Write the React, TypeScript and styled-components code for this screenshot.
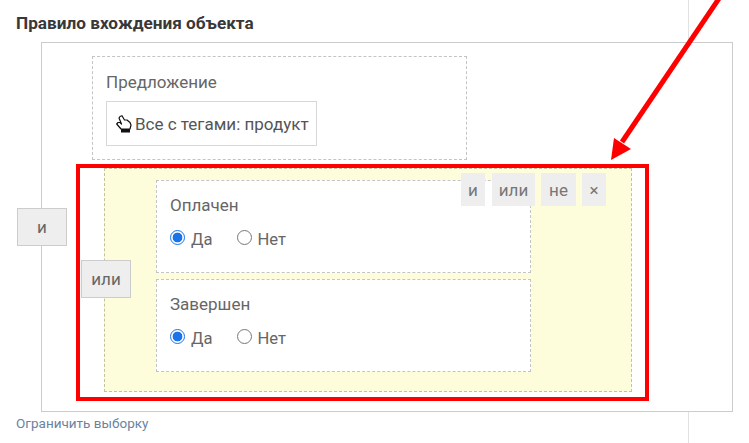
import styled, { createGlobalStyle } from "styled-components";

const GlobalStyle = createGlobalStyle`
  html, body {
    margin: 0;
    padding: 0;
    background: #fff;
    overflow: hidden;
  }
  body {
    font-family: Roboto, "Liberation Sans", sans-serif;
    color: #4a4a4a;
  }
`;

const Page = styled.div`
  position: relative;
  width: 749px;
  height: 443px;
  overflow: hidden;
`;

const Panel = styled.div`
  box-sizing: border-box;
  width: 689px;
  height: 443px;
  padding: 14px 0 0 16px;
  border-right: 1px solid #e2e2e2;
`;

const Title = styled.h3`
  margin: 0 0 9px;
  font-size: 17.2px;
  line-height: 19px;
  font-weight: 700;
  color: #383838;
`;

const RuleBox = styled.div`
  position: relative;
  box-sizing: border-box;
  width: 692px;
  height: 370px;
  margin-left: 25px;
  padding: 13px 0 0 50px;
  background: #fff;
  border: 1px solid #ccc;
`;

const Condition = styled.div<{ $height: number; $top: number }>`
  box-sizing: border-box;
  width: 375px;
  height: ${(p) => p.$height}px;
  padding: ${(p) => p.$top}px 13px 0;
  background: #fff;
  border: 1px dashed #c4c4c4;
`;

const ConditionName = styled.div`
  font-size: 17px;
  line-height: 24px;
  color: #666;
`;

const Offer = styled.div`
  box-sizing: border-box;
  display: flex;
  align-items: center;
  gap: 3px;
  width: 211px;
  height: 45px;
  margin-top: 7px;
  padding-left: 9px;
  font-size: 17px;
  color: #555;
  border: 1px solid #d8d8d8;
`;

const OrGroup = styled.div`
  position: relative;
  box-sizing: border-box;
  display: flex;
  flex-direction: column;
  gap: 6px;
  width: 528px;
  height: 224px;
  margin: 8px 0 0 12px;
  padding: 11px 0 0 51px;
  background: #fdfddc;
  border: 1px dashed #c2c2a0;
`;

const RadioRow = styled.div`
  display: flex;
  gap: 24px;
  margin-top: 12px;
`;

const RadioLabel = styled.label`
  display: flex;
  align-items: center;
  gap: 6px;
  font-size: 16.6px;
  line-height: 22px;
  color: #666;
`;

const Radio = styled.input.attrs({ type: "radio" })`
  box-sizing: border-box;
  appearance: none;
  width: 15px;
  height: 15px;
  margin: -5px 0 0;
  background: #fff;
  border: 1.5px solid #777;
  border-radius: 50%;

  &:checked {
    border: 1.5px solid #1a73e8;
    background: radial-gradient(circle, #1a73e8 0 4.6px, #fff 5.2px);
  }
`;

const OpButton = styled.button<{ $left: number; $top: number }>`
  position: absolute;
  left: ${(p) => p.$left}px;
  top: ${(p) => p.$top}px;
  box-sizing: border-box;
  width: 50px;
  height: 38px;
  padding: 0;
  font: inherit;
  font-size: 17px;
  color: #666;
  background: #eee;
  border: 1px solid #ccc;
`;

const Toolbar = styled.div`
  position: absolute;
  top: 4px;
  left: 356px;
  display: flex;
  gap: 6px;
`;

const ToolButton = styled.button<{ $width: number; $end?: number }>`
  box-sizing: border-box;
  width: ${(p) => p.$width}px;
  height: 33px;
  margin-right: ${(p) => p.$end ?? 0}px;
  padding: 0;
  font: inherit;
  font-size: 17px;
  color: #777;
  background: #eee;
  border: none;
`;

const LimitLink = styled.a`
  display: block;
  margin-top: 1px;
  font-size: 13.5px;
  line-height: 20px;
  color: #6a83a0;
`;

const RedFrame = styled.div`
  position: absolute;
  left: 76px;
  top: 164px;
  box-sizing: border-box;
  width: 573px;
  height: 237px;
  border: 4.5px solid #ff0000;
  pointer-events: none;
`;

const Arrow = styled.svg`
  position: absolute;
  left: 600px;
  top: 0;
`;

const HandIcon = () => (
  <svg width="16" height="18" viewBox="0 0 16 18">
    <path
      d="M4 1.5 L6 0.7 L8.5 5 L11 5 L14 7.5 L15 10 L14 14 L5 14 L0.7 9 L2 7.5 L4 7.5 L5.5 9 L3 3 Z"
      fill="#fff"
      stroke="#111"
      strokeWidth="1.2"
      strokeLinejoin="round"
    />
    <rect x="5" y="14" width="9" height="3.5" fill="#111" />
  </svg>
);

const StatusCondition = ({ name, group }: { name: string; group: string }) => (
  <Condition $height={93} $top={12}>
    <ConditionName>{name}</ConditionName>
    <RadioRow>
      <RadioLabel>
        <Radio name={group} defaultChecked />
        Да
      </RadioLabel>
      <RadioLabel>
        <Radio name={group} />
        Нет
      </RadioLabel>
    </RadioRow>
  </Condition>
);

const App = () => {
  return (
    <Page>
      <GlobalStyle />
      <Panel>
        <Title>Правило вхождения объекта</Title>
        <RuleBox>
          <OpButton $left={-25} $top={165}>
            и
          </OpButton>
          <Condition $height={104} $top={13}>
            <ConditionName>Предложение</ConditionName>
            <Offer>
              <HandIcon />
              Все с тегами: продукт
            </Offer>
          </Condition>
          <OrGroup>
            <OpButton $left={-24} $top={91}>
              или
            </OpButton>
            <StatusCondition name="Оплачен" group="paid" />
            <StatusCondition name="Завершен" group="done" />
            <Toolbar>
              <ToolButton $width={24} $end={1}>
                и
              </ToolButton>
              <ToolButton $width={43}>или</ToolButton>
              <ToolButton $width={35}>не</ToolButton>
              <ToolButton $width={24}>×</ToolButton>
            </Toolbar>
          </OrGroup>
        </RuleBox>
        <LimitLink>Ограничить выборку</LimitLink>
      </Panel>
      <RedFrame />
      <Arrow width="149" height="165" viewBox="0 0 149 165">
        <line x1="120" y1="-3" x2="22" y2="142" stroke="#ff0000" strokeWidth="5" />
        <polygon points="11,160 14,138 31,149" fill="#ff0000" />
      </Arrow>
    </Page>
  );
};

export default App;
